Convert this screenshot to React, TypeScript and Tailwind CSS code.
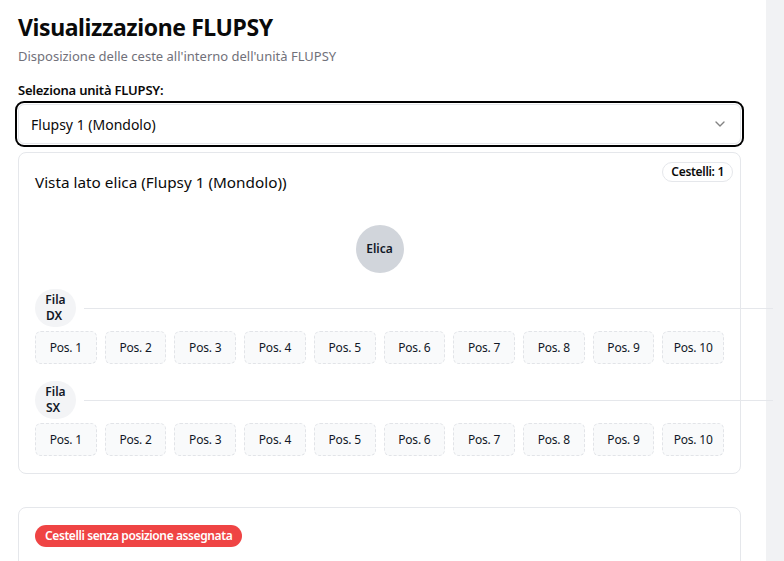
import React from "react";
import { ChevronDown } from "lucide-react";

const positions = Array.from({ length: 10 }, (_, i) => i + 1);

function Row({ label }: { label: string }) {
  return (
    <div className="flex flex-col gap-1">
      <div className="flex items-center gap-2">
        <div className="flex h-[38px] w-[41px] shrink-0 flex-col items-center justify-center rounded-full bg-[#f3f4f6] text-[12px] font-semibold leading-4 text-[#111827]">
          <span>Fila</span>
          <span className="self-start pl-[11px]">{label}</span>
        </div>
        <div className="h-px w-full shrink-0 bg-[#e5e7eb]" />
      </div>
      <div className="flex gap-2">
        {positions.map((p) => (
          <div
            key={p}
            className="flex h-[33px] flex-1 items-center justify-center rounded-md border border-dashed border-[#e2e4e8] bg-[#f9fafb] text-[12px] tracking-[-0.2px] text-[#111827]"
          >
            Pos. {p}
          </div>
        ))}
      </div>
    </div>
  );
}

export default function App() {
  return (
    <div
      className="flex h-[561px] w-[784px] overflow-hidden bg-[#f1f2f4]"
      style={{ fontFamily: '"Noto Sans", "Open Sans", sans-serif' }}
    >
      <div className="w-[766px] shrink-0 bg-white pl-[18px] pr-[25px] pt-[11px]">
        <h1 className="text-[23px] font-bold leading-8 tracking-[-0.4px] text-[#0a0a0a]">
          Visualizzazione FLUPSY
        </h1>
        <p className="mt-[3px] text-[13px] leading-5 text-[#71717a]">
          Disposizione delle ceste all'interno dell'unità FLUPSY
        </p>

        <div className="mt-[14px] text-[13px] font-semibold leading-5 tracking-[-0.2px] text-[#0a0a0a]">
          Seleziona unità FLUPSY:
        </div>
        <div className="mt-[4px] flex h-[40px] items-center justify-between rounded-md border border-[#e5e7eb] bg-white pl-3 pr-3 text-[14px] text-[#0a0a0a] ring-2 ring-black ring-offset-1">
          <span>Flupsy 1 (Mondolo)</span>
          <ChevronDown className="h-4 w-4 opacity-50" />
        </div>

        <div className="relative mt-[8px] rounded-lg border border-[#e5e7eb] bg-white px-4 pb-[17px] pt-4">
          <div className="absolute right-[7px] top-[9px] rounded-full border border-[#e5e7eb] px-[8px] py-[1px] text-[12px] font-semibold leading-4 tracking-[-0.3px] text-[#0a0a0a]">
            Cestelli: 1
          </div>
          <div className="pt-[1px] text-[15.3px] leading-6 text-[#0a0a0a]">
            Vista lato elica (Flupsy 1 (Mondolo))
          </div>
          <div className="mt-[31px] flex justify-center">
            <div className="flex h-[48px] w-[48px] items-center justify-center rounded-full bg-[#d1d5db] text-[12px] font-semibold text-[#111827]">
              Elica
            </div>
          </div>
          <div className="mt-[16px] flex flex-col gap-[17px]">
            <Row label="DX" />
            <Row label="SX" />
          </div>
        </div>

        <div className="mt-[33px] flex h-[80px] items-start rounded-lg border border-[#e5e7eb] bg-white px-4 pt-[17px]">
          <span className="rounded-full bg-[#ef4444] px-[10px] py-[2px] text-[12px] font-semibold leading-[18px] tracking-[-0.4px] text-white">
            Cestelli senza posizione assegnata
          </span>
        </div>
      </div>
    </div>
  );
}
